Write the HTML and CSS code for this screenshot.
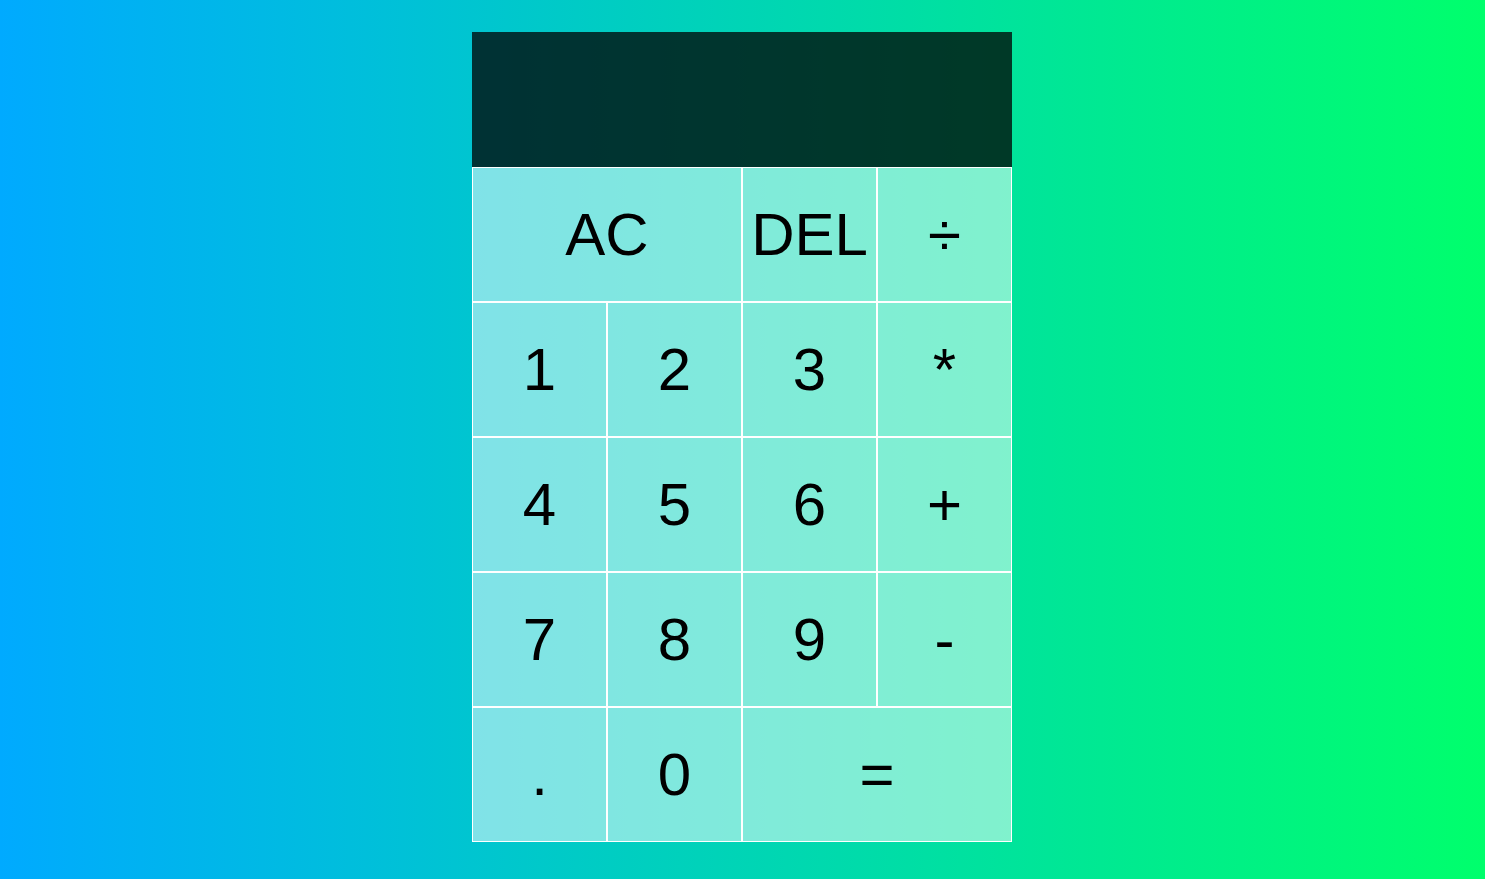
FILE: index.html
```html
<!DOCTYPE html>
<html lang="en">
<head>
<meta charset="UTF-8">
<title>Calculator</title>
<link rel="stylesheet" href="styles.css">
</head>
<body>
<div class="calculator-grid">
  <div class="output">
    <div class="previous-operand"></div>
    <div class="current-operand"></div>
  </div>
  <button class="span-two">AC</button>
  <button>DEL</button>
  <button>÷</button>
  <button>1</button>
  <button>2</button>
  <button>3</button>
  <button>*</button>
  <button>4</button>
  <button>5</button>
  <button>6</button>
  <button>+</button>
  <button>7</button>
  <button>8</button>
  <button>9</button>
  <button>-</button>
  <button>.</button>
  <button>0</button>
  <button class="span-two">=</button>
</div>
</body>
</html>
```
FILE: styles.css
```css
*, *::before, *::after {
  box-sizing: border-box;
  font-family: "Liberation Sans", Arial, sans-serif;
  font-weight: normal;
}

html, body {
  margin: 0;
  padding: 0;
  height: 100%;
}

body {
  background: linear-gradient(to right, #00AAFF, #00FF6C);
  overflow: hidden;
}

.calculator-grid {
  display: grid;
  justify-content: center;
  align-content: start;
  padding-top: 32px;
  padding-right: 1px;
  min-height: 100vh;
  grid-template-columns: repeat(4, 135px);
  grid-template-rows: minmax(135px, auto) repeat(5, 135px);
}

.calculator-grid > button {
  cursor: pointer;
  font-size: 60px;
  color: #000;
  border: 1px solid white;
  outline: none;
  background-color: rgba(255, 255, 255, 0.5);
  padding: 0;
  margin: 0;
  border-radius: 0;
}

.span-two {
  grid-column: span 2;
}

.output {
  grid-column: 1 / -1;
  background-color: rgba(0, 0, 0, 0.75);
  display: flex;
  align-items: flex-end;
  justify-content: space-around;
  flex-direction: column;
  padding: 10px;
  word-wrap: break-word;
  word-break: break-all;
}

.previous-operand {
  color: rgba(255, 255, 255, 0.75);
  font-size: 1.5rem;
}

.current-operand {
  color: white;
  font-size: 2.5rem;
}
```
